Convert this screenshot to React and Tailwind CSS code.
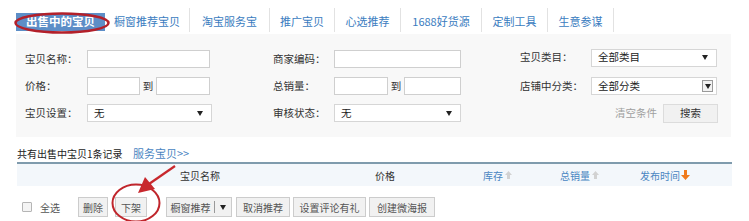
import React from "react";

const font = { fontFamily: '"Noto Sans CJK SC", "Noto Sans", sans-serif' };

function Tri() {
  return (
    <svg width="6" height="5" viewBox="0 0 6 5">
      <path d="M0 0 H6 L3 5 Z" fill="#222" />
    </svg>
  );
}

function Input({ w }) {
  return <div className={`h-[18px] border border-[#cfcfcf] bg-white ${w}`} />;
}

function Select({ w, text, boxed }) {
  return (
    <div className={`h-[18px] border border-[#d6d6d6] bg-white flex items-center justify-between pl-[6px] ${boxed ? "pr-[3px]" : "pr-[8px]"} ${w}`}>
      <span className="text-[10.5px] text-[#222] leading-none">{text}</span>
      {boxed ? (
        <div className="w-[11px] h-[12px] border border-[#9a9a9a] bg-[#f2f2f2] flex items-center justify-center">
          <Tri />
        </div>
      ) : (
        <Tri />
      )}
    </div>
  );
}

function Label({ children, w }) {
  return <div className={`text-[10.5px] text-[#333] leading-none ${w}`}>{children}</div>;
}

function UpArrow() {
  return (
    <svg width="7" height="8" viewBox="0 0 7 8" className="ml-[2px]">
      <path d="M3.5 0 L7 4 H5 V8 H2 V4 H0 Z" fill="#d2d2d2" />
    </svg>
  );
}

function DownArrow() {
  return (
    <svg width="9" height="10" viewBox="0 0 9 10" className="ml-[1px]">
      <path d="M3 0 H6 V5 H9 L4.5 10 L0 5 H3 Z" fill="#f07a1c" />
    </svg>
  );
}

function Btn({ children, w, ml }) {
  return (
    <div className={`h-[20px] border border-[#cccccc] bg-[#f1f1f1] flex items-center justify-center text-[10px] text-[#555] ${w} ${ml}`}>
      {children}
    </div>
  );
}

const tabs = [
  ["橱窗推荐宝贝", "w-[85px]"],
  ["淘宝服务宝", "w-[80px]"],
  ["推广宝贝", "w-[65px]"],
  ["心选推荐", "w-[66px]"],
  ["1688好货源", "w-[81px]"],
  ["定制工具", "w-[66px]"],
  ["生意参谋", "w-[66px]"],
];

export default function App() {
  return (
    <div className="relative w-[749px] h-[221px] bg-white overflow-hidden" style={font}>
      {/* Tabs */}
      <div className="flex h-[33px] pt-[8px] pl-[16px]">
        <div className="w-[89px] h-[18px] mt-[5px] bg-[#5d8ec7] flex items-center justify-center text-white font-bold text-[11.5px]">
          出售中的宝贝
        </div>
        {tabs.map(([t, w]) => (
          <div key={t} className={`h-[24px] border-r border-[#e2e2e2] flex items-center justify-center pt-[3px] text-[11px] text-[#3a7cc0] ${w}`}>
            {t}
          </div>
        ))}
      </div>

      {/* Filter panel */}
      <div className="ml-[16px] mt-[1px] w-[715px] h-[103px] bg-[#f8f8f8] pt-[16px] pl-[9px] flex flex-col gap-[9px]">
        <div className="flex items-center h-[18px]">
          <div className="flex items-center w-[248px]">
            <Label w="w-[62px]">宝贝名称：</Label>
            <Input w="w-[123px]" />
          </div>
          <div className="flex items-center w-[247px]">
            <Label w="w-[61px]">商家编码：</Label>
            <Input w="w-[127px]" />
          </div>
          <div className="flex items-center -mt-[3px]">
            <Label w="w-[71px]">宝贝类目：</Label>
            <Select w="w-[126px]" text="全部类目" />
          </div>
        </div>
        <div className="flex items-center h-[18px]">
          <div className="flex items-center w-[248px]">
            <Label w="w-[62px]">价格：</Label>
            <Input w="w-[53px]" />
            <span className="text-[10.5px] text-[#333] w-[16px] text-center">到</span>
            <Input w="w-[54px]" />
          </div>
          <div className="flex items-center w-[247px]">
            <Label w="w-[61px]">总销量：</Label>
            <Input w="w-[54px]" />
            <span className="text-[10.5px] text-[#333] w-[16px] text-center">到</span>
            <Input w="w-[57px]" />
          </div>
          <div className="flex items-center">
            <Label w="w-[71px]">店铺中分类：</Label>
            <Select w="w-[126px]" text="全部分类" boxed />
          </div>
        </div>
        <div className="flex items-center h-[18px]">
          <div className="flex items-center w-[248px]">
            <Label w="w-[62px]">宝贝设置：</Label>
            <Select w="w-[125px]" text="无" />
          </div>
          <div className="flex items-center w-[247px]">
            <Label w="w-[61px]">审核状态：</Label>
            <Select w="w-[127px]" text="无" />
          </div>
          <div className="flex items-center justify-end w-[198px]">
            <span className="text-[10.5px] text-[#a0a0a0]">清空条件</span>
            <div className="ml-[6px] w-[55px] h-[19px] border border-[#dcdcdc] bg-[#f1f1f1] flex items-center justify-center text-[10.5px] text-[#333]">
              搜索
            </div>
          </div>
        </div>
      </div>

      {/* Summary */}
      <div className="ml-[17px] mt-[8px] h-[16px] flex items-center">
        <span className="text-[10px] text-[#222] w-[116px]">共有出售中宝贝1条记录</span>
        <span className="text-[11px] text-[#4a86c2]">服务宝贝&gt;&gt;</span>
      </div>

      {/* Table header */}
      <div className="ml-[17px] mt-[1px] w-[715px] border-t-2 border-[#7f9bad] h-[24px] bg-[#f3f7fb] flex items-center text-[10px]">
        <div className="w-[163px]" />
        <div className="w-[195px] text-[#333]">宝贝名称</div>
        <div className="w-[108px] text-[#333]">价格</div>
        <div className="w-[77px] flex items-center text-[#4a86c2]">库存<UpArrow /></div>
        <div className="w-[80px] flex items-center text-[#4a86c2]">总销量<UpArrow /></div>
        <div className="flex items-center text-[#4a86c2]">发布时间<DownArrow /></div>
      </div>

      {/* Actions */}
      <div className="ml-[22px] mt-[11px] flex items-center h-[20px]">
        <div className="w-[10px] h-[10px] border border-[#b5b5b5] bg-[#f4f4f4] rounded-[1px]" />
        <span className="ml-[8px] w-[22px] text-[10px] text-[#555]">全选</span>
        <Btn w="w-[30px]" ml="ml-[16px]">删除</Btn>
        <Btn w="w-[32px]" ml="ml-[7px]">下架</Btn>
        <div className="ml-[19px] h-[20px] w-[66px] border border-[#cccccc] bg-[#f1f1f1] flex items-center text-[10px] text-[#555]">
          <span className="w-[47px] text-center">橱窗推荐</span>
          <div className="h-[12px] border-l border-[#999]" />
          <div className="flex-1 flex justify-center"><Tri /></div>
        </div>
        <Btn w="w-[54px]" ml="ml-[4px]">取消推荐</Btn>
        <Btn w="w-[73px]" ml="ml-[3px]">设置评论有礼</Btn>
        <Btn w="w-[66px]" ml="ml-[3px]">创建微海报</Btn>
      </div>

      {/* Annotations overlay */}
      <svg className="absolute left-0 top-0 pointer-events-none" width="749" height="221" viewBox="0 0 749 221">
        <ellipse cx="62" cy="23" rx="46.5" ry="9.5" fill="none" stroke="#b3202a" strokeWidth="2.5" />
        <ellipse cx="136" cy="203" rx="23.5" ry="18.5" fill="none" stroke="#c0262c" strokeWidth="2" />
        <line x1="175" y1="166" x2="149" y2="184" stroke="#c8282d" strokeWidth="2.2" />
        <path d="M138 193 L145 177 L155 189 Z" fill="#c8282d" />
      </svg>
    </div>
  );
}
